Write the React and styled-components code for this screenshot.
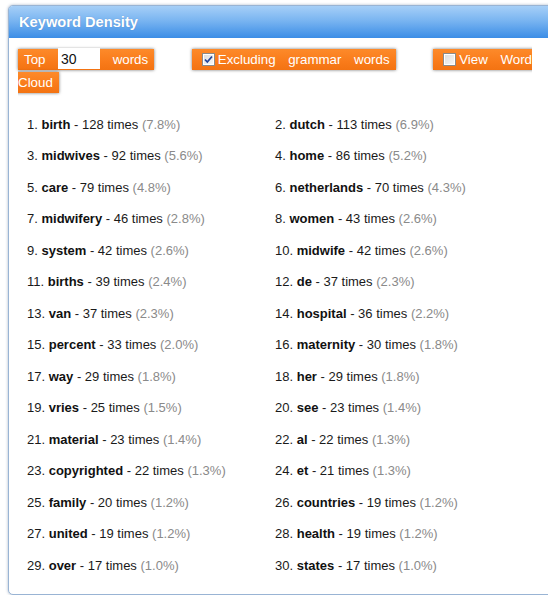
import React from "react";
import styled, { createGlobalStyle } from "styled-components";

const Global = createGlobalStyle`
  html, body { margin: 0; padding: 0; overflow: hidden; background: #fff; }
  body { font-family: "Liberation Sans", Arial, sans-serif; }
`;

const Page = styled.div`
  padding: 5px 0 0 8px;
  width: 600px;
`;

const Panel = styled.div`
  width: 580px;
  border: 1px solid #99b4d4;
  border-radius: 5px;
  background: #fff;
  box-shadow: 0 0 3px rgba(60, 90, 130, 0.45);
  overflow: hidden;
`;

const Header = styled.div`
  height: 32px;
  display: flex;
  align-items: center;
  padding-left: 10px;
  background: linear-gradient(to bottom, #a6cff7 0%, #7ab5f1 45%, #3b8de6 100%);
  color: #fff;
  font-weight: bold;
  font-size: 14.67px;
  text-shadow: 0 0 1px rgba(40, 80, 140, 0.4);
`;

const Body = styled.div`
  padding: 9px 0 13px 9px;
`;

const Toolbar = styled.div`
  width: 514px;
  text-align: justify;
  font-size: 13.33px;
  line-height: 23px;
  color: #fff;
`;

const Chip = styled.span`
  background: linear-gradient(to bottom, #fd8a2a 0%, #f97b1a 60%, #f37312 100%);
  padding: 3px 6px;
  margin-right: 25px;
  box-shadow: 0 0 3px rgba(0, 0, 0, 0.55);
`;

const NumberInput = styled.input`
  display: inline-block;
  box-sizing: border-box;
  width: 42px;
  height: 22px;
  margin: 0;
  padding: 0 3px;
  border: none;
  border-top: 1px solid #e4e4e4;
  vertical-align: baseline;
  font-family: "Liberation Sans", Arial, sans-serif;
  font-size: 14px;
  color: #111;
  background: #fff;
  outline: none;
`;

const Box = styled.span`
  display: inline-block;
  box-sizing: border-box;
  width: 13px;
  height: 13px;
  margin: 0 3px 0 4px;
  vertical-align: -2px;
  border: 1px solid #8a8a8a;
  background: linear-gradient(135deg, #dcdcdc 0%, #f8f8f8 100%);
  position: relative;
  box-shadow: inset 0 0 0 1px #fff;
`;

const Check = () => (
  <svg width="11" height="11" viewBox="0 0 11 11" style={{ position: "absolute", left: 0, top: 0 }}>
    <path d="M2 5.5 L4.3 8 L9 2.5" fill="none" stroke="#22449a" strokeWidth="1.8" />
  </svg>
);

const List = styled.div`
  display: grid;
  grid-template-columns: 248px 1fr;
  margin-top: 15px;
  font-size: 13px;
  line-height: 31.5px;
  color: #1a1a1a;
`;

const Item = styled.div`
  padding-left: 9px;
  white-space: nowrap;
`;

const Word = styled.b`
  font-weight: bold;
  color: #111;
`;

const Pct = styled.span`
  color: #8a8a8a;
`;

const data = [
  ["birth", 128, "7.8"], ["dutch", 113, "6.9"], ["midwives", 92, "5.6"], ["home", 86, "5.2"],
  ["care", 79, "4.8"], ["netherlands", 70, "4.3"], ["midwifery", 46, "2.8"], ["women", 43, "2.6"],
  ["system", 42, "2.6"], ["midwife", 42, "2.6"], ["births", 39, "2.4"], ["de", 37, "2.3"],
  ["van", 37, "2.3"], ["hospital", 36, "2.2"], ["percent", 33, "2.0"], ["maternity", 30, "1.8"],
  ["way", 29, "1.8"], ["her", 29, "1.8"], ["vries", 25, "1.5"], ["see", 23, "1.4"],
  ["material", 23, "1.4"], ["al", 22, "1.3"], ["copyrighted", 22, "1.3"], ["et", 21, "1.3"],
  ["family", 20, "1.2"], ["countries", 19, "1.2"], ["united", 19, "1.2"], ["health", 19, "1.2"],
  ["over", 17, "1.0"], ["states", 17, "1.0"],
];

export default function App() {
  return (
    <>
      <Global />
      <Page>
        <Panel>
          <Header>Keyword Density</Header>
          <Body>
            <Toolbar>
              <Chip>Top <NumberInput defaultValue="30" /> words</Chip>{" "}
              <Chip><Box><Check /></Box>Excluding grammar words</Chip>{" "}
              <Chip><Box />View Word Cloud</Chip>
            </Toolbar>
            <List>
              {data.map(([w, n, p], i) => (
                <Item key={w}>
                  {i + 1}. <Word>{w}</Word> - {n} times <Pct>({p}%)</Pct>
                </Item>
              ))}
            </List>
          </Body>
        </Panel>
      </Page>
    </>
  );
}
